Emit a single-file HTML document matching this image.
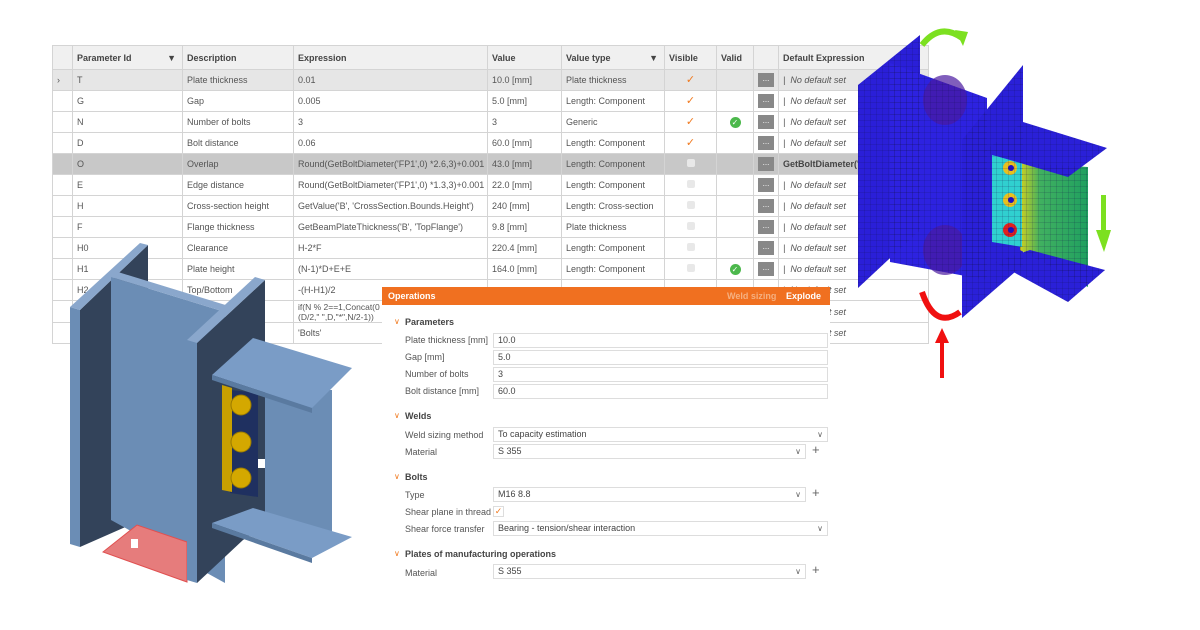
<!DOCTYPE html>
<html><head><meta charset="utf-8"><style>
body{margin:0;width:1200px;height:630px;background:#fff;position:relative;overflow:hidden;font-family:"Liberation Sans",sans-serif;font-size:9px;color:#555}
.a{position:absolute}
table{position:absolute;left:52px;top:45px;border-collapse:collapse;table-layout:fixed}
td{border:1px solid #d4d4d4;padding:0 0 0 4px;height:20px;white-space:nowrap;overflow:hidden;vertical-align:middle;line-height:10px}
tr.h td{background:#f0f0f0;font-weight:bold;color:#444;height:23px}
tr.s td{background:#e6e6e6}
tr.o td{background:#c8c8c8}
.ck{color:#f07a20;font-size:11px;text-align:center;padding:0}
.bx{display:inline-block;width:8px;height:8px;background:#e8e8e8;border-radius:2px}
.dots{display:inline-block;width:16px;height:14px;background:#888;color:#fff;text-align:center;line-height:12px;font-size:8px}
.nd{font-style:italic}
.ok{display:inline-block;width:11px;height:11px;border-radius:50%;background:#4cb84c;color:#fff;font-size:8px;line-height:11px;text-align:center}
#ops{position:absolute;left:382px;top:287px;width:448px;height:303px;background:#fff}
#ops .hd{height:18px;background:#f07020;color:#fff;font-weight:bold;line-height:18px;padding-left:6px}
.lb{position:absolute;left:23px}
.in{position:absolute;left:111px;width:329px;height:13px;border:1px solid #ddd;line-height:13px;padding-left:4px;color:#444}
.sec{position:absolute;left:23px;font-weight:bold;color:#444}
.chev{position:absolute;left:12px;color:#f07a20;font-size:8px}
.dd{position:absolute;right:4px;top:0;font-size:8px;color:#666}
.pl{position:absolute;left:430px;font-size:13px;color:#666}
</style></head><body>
<table>
<colgroup><col style="width:20px"><col style="width:110px"><col style="width:111px"><col style="width:194px"><col style="width:74px"><col style="width:103px"><col style="width:52px"><col style="width:37px"><col style="width:25px"><col style="width:150px"></colgroup>
<tr class="h"><td></td><td>Parameter Id <span style="float:right;margin-right:6px">▼</span></td><td>Description</td><td>Expression</td><td>Value</td><td>Value type <span style="float:right;margin-right:6px">▼</span></td><td>Visible</td><td>Valid</td><td></td><td>Default Expression</td></tr>
<tr class="s"><td>›</td><td>T</td><td>Plate thickness</td><td>0.01</td><td>10.0 [mm]</td><td>Plate thickness</td><td class="ck">✓</td><td></td><td><span class="dots">...</span></td><td class="nd">|&nbsp; No default set</td></tr>
<tr><td></td><td>G</td><td>Gap</td><td>0.005</td><td>5.0 [mm]</td><td>Length: Component</td><td class="ck">✓</td><td></td><td><span class="dots">...</span></td><td class="nd">|&nbsp; No default set</td></tr>
<tr><td></td><td>N</td><td>Number of bolts</td><td>3</td><td>3</td><td>Generic</td><td class="ck">✓</td><td style="text-align:center;padding:0"><span class="ok">✓</span></td><td><span class="dots">...</span></td><td class="nd">|&nbsp; No default set</td></tr>
<tr><td></td><td>D</td><td>Bolt distance</td><td>0.06</td><td>60.0 [mm]</td><td>Length: Component</td><td class="ck">✓</td><td></td><td><span class="dots">...</span></td><td class="nd">|&nbsp; No default set</td></tr>
<tr class="o"><td></td><td>O</td><td>Overlap</td><td>Round(GetBoltDiameter('FP1',0) *2.6,3)+0.001</td><td>43.0 [mm]</td><td>Length: Component</td><td style="text-align:center;padding:0"><span class="bx"></span></td><td></td><td><span class="dots">...</span></td><td style="font-weight:bold;color:#444">GetBoltDiameter('</td></tr>
<tr><td></td><td>E</td><td>Edge distance</td><td>Round(GetBoltDiameter('FP1',0) *1.3,3)+0.001</td><td>22.0 [mm]</td><td>Length: Component</td><td style="text-align:center;padding:0"><span class="bx"></span></td><td></td><td><span class="dots">...</span></td><td class="nd">|&nbsp; No default set</td></tr>
<tr><td></td><td>H</td><td>Cross-section height</td><td>GetValue('B', 'CrossSection.Bounds.Height')</td><td>240 [mm]</td><td>Length: Cross-section</td><td style="text-align:center;padding:0"><span class="bx"></span></td><td></td><td><span class="dots">...</span></td><td class="nd">|&nbsp; No default set</td></tr>
<tr><td></td><td>F</td><td>Flange thickness</td><td>GetBeamPlateThickness('B', 'TopFlange')</td><td>9.8 [mm]</td><td>Plate thickness</td><td style="text-align:center;padding:0"><span class="bx"></span></td><td></td><td><span class="dots">...</span></td><td class="nd">|&nbsp; No default set</td></tr>
<tr><td></td><td>H0</td><td>Clearance</td><td>H-2*F</td><td>220.4 [mm]</td><td>Length: Component</td><td style="text-align:center;padding:0"><span class="bx"></span></td><td></td><td><span class="dots">...</span></td><td class="nd">|&nbsp; No default set</td></tr>
<tr><td></td><td>H1</td><td>Plate height</td><td>(N-1)*D+E+E</td><td>164.0 [mm]</td><td>Length: Component</td><td style="text-align:center;padding:0"><span class="bx"></span></td><td style="text-align:center;padding:0"><span class="ok">✓</span></td><td><span class="dots">...</span></td><td class="nd">|&nbsp; No default set</td></tr>
<tr><td></td><td>H2</td><td>Top/Bottom</td><td>-(H-H1)/2</td><td></td><td></td><td></td><td></td><td></td><td class="nd">|&nbsp; No default set</td></tr>
<tr><td style="height:21px"></td><td></td><td></td><td style="font-size:8.5px">if(N % 2==1,Concat(0<br>(D/2," ",D,"*",N/2-1))</td><td></td><td></td><td></td><td></td><td></td><td class="nd">|&nbsp; No default set</td></tr>
<tr><td></td><td></td><td></td><td>'Bolts'</td><td></td><td></td><td></td><td></td><td></td><td class="nd">|&nbsp; No default set</td></tr>
</table>

<svg class="a" style="left:0;top:0" width="400" height="630" viewBox="0 0 400 630">
<polygon points="80,310 148,245 148,517 80,547" fill="#33435a"/>
<polygon points="70,307 80,310 80,547 70,544" fill="#6b8db5"/>
<polygon points="70,307 140,243 148,245 80,310" fill="#8aa7cc"/>
<polygon points="111,277 225,312 225,583 111,520" fill="#6b8db5"/>
<polygon points="111,277 118,272 232,307 225,312" fill="#8aa7cc"/>
<polygon points="103,552 137,525 187,542 187,582" fill="#e67c7c" stroke="#e05050" stroke-width="1"/>
<polygon points="232,387 332,390 332,533 232,510" fill="#6b8db5"/>
<polygon points="197,343 265,280 265,525 243,540 197,583" fill="#33435a"/>
<polygon points="187,340 197,343 197,583 187,580" fill="#6b8db5"/>
<polygon points="187,340 255,277 265,280 197,343" fill="#8aa7cc"/>
<polygon points="232,387 332,390 332,533 232,510" fill="#6b8db5" opacity="0"/>
<polygon points="230,390 258,393 258,497 230,493" fill="#1f3060"/>
<polygon points="222,385 232,388 232,492 222,490" fill="#c8a000"/>
<circle cx="241" cy="405" r="10" fill="#d4a800" stroke="#9a7a00"/>
<circle cx="241" cy="442" r="10" fill="#d4a800" stroke="#9a7a00"/>
<circle cx="241" cy="478" r="10" fill="#d4a800" stroke="#9a7a00"/>
<polygon points="212,375 253,338 352,368 312,408" fill="#7a9cc6"/>
<polygon points="212,375 312,408 312,413 212,380" fill="#5a7aa0"/>
<polygon points="212,523 253,508 352,537 312,558" fill="#7a9cc6"/>
<polygon points="212,523 312,558 312,563 212,528" fill="#5a7aa0"/>
<rect x="258" y="459" width="7" height="9" fill="#fff"/>
<rect x="131" y="539" width="7" height="9" fill="#fff"/>
</svg>

<div id="ops"><div class="hd">Operations<span style="position:absolute;left:345px;color:#f5b080">Weld sizing</span><span style="position:absolute;left:404px">Explode</span></div>
<span class="chev" style="top:30px">∨</span><span class="sec" style="top:30px">Parameters</span>
<span class="lb" style="top:48px">Plate thickness [mm]</span><div class="in" style="top:46px">10.0</div>
<span class="lb" style="top:65px">Gap [mm]</span><div class="in" style="top:63px">5.0</div>
<span class="lb" style="top:82px">Number of bolts</span><div class="in" style="top:80px">3</div>
<span class="lb" style="top:99px">Bolt distance [mm]</span><div class="in" style="top:97px">60.0</div>
<span class="chev" style="top:124px">∨</span><span class="sec" style="top:124px">Welds</span>
<span class="lb" style="top:143px">Weld sizing method</span><div class="in" style="top:140px">To capacity estimation<span class="dd">∨</span></div>
<span class="lb" style="top:160px">Material</span><div class="in" style="top:157px;width:307px">S 355<span class="dd">∨</span></div><span class="pl" style="top:155px">+</span>
<span class="chev" style="top:185px">∨</span><span class="sec" style="top:185px">Bolts</span>
<span class="lb" style="top:203px">Type</span><div class="in" style="top:200px;width:307px">M16 8.8<span class="dd">∨</span></div><span class="pl" style="top:198px">+</span>
<span class="lb" style="top:220px">Shear plane in thread</span><span class="a" style="left:111px;top:219px;width:9px;height:9px;border:1px solid #ddd;color:#f07a20;font-size:9px;line-height:9px;text-align:center">✓</span>
<span class="lb" style="top:237px">Shear force transfer</span><div class="in" style="top:234px">Bearing - tension/shear interaction<span class="dd">∨</span></div>
<span class="chev" style="top:262px">∨</span><span class="sec" style="top:262px">Plates of manufacturing operations</span>
<span class="lb" style="top:281px">Material</span><div class="in" style="top:277px;width:307px">S 355<span class="dd">∨</span></div><span class="pl" style="top:275px">+</span>
</div>

<svg class="a" style="left:840px;top:20px" width="300" height="370" viewBox="840 20 300 370">
<defs><pattern id="m" width="6" height="6" patternUnits="userSpaceOnUse"><path d="M0 0H6M0 0V6" stroke="#10104a" stroke-width="0.5" stroke-opacity="0.6" fill="none"/></pattern>
<linearGradient id="g" x1="0" x2="1"><stop offset="0" stop-color="#d0d020"/><stop offset="0.3" stop-color="#40b060"/><stop offset="1" stop-color="#20a060"/></linearGradient></defs>
<polygon points="858,85 920,35 920,230 858,288" fill="#2a1fd8"/>
<polygon points="890,63 987,98 987,280 890,262" fill="#2d22e0"/>
<ellipse cx="945" cy="100" rx="22" ry="25" fill="#4a1aa0" opacity="0.7"/>
<ellipse cx="945" cy="250" rx="22" ry="25" fill="#4a1aa0" opacity="0.7"/>
<polygon points="962,140 1023,65 1023,265 962,318" fill="#2a20d8"/>
<polygon points="1020,163 1088,167 1088,287 1020,250" fill="url(#g)"/>
<polygon points="992,155 1022,163 1022,247 992,242" fill="#30d0d0"/>
<circle cx="1010" cy="168" r="7" fill="#e8c020"/><circle cx="1010" cy="200" r="7" fill="#e8c020"/><circle cx="1010" cy="230" r="7" fill="#e02020"/>
<circle cx="1011" cy="168" r="3" fill="#2010c0"/><circle cx="1011" cy="200" r="3" fill="#2010c0"/><circle cx="1011" cy="230" r="3" fill="#2010c0"/>
<polygon points="983,152 1023,122 1107,148 1068,177" fill="#2a20d8"/>
<polygon points="995,262 1030,250 1105,270 1068,302" fill="#2a20d8"/>
<g fill="url(#m)"><polygon points="858,85 920,35 920,230 858,288"/><polygon points="890,63 987,98 987,280 890,262"/><polygon points="962,140 1023,65 1023,265 962,318"/><polygon points="1020,163 1088,167 1088,287 1020,250"/><polygon points="983,152 1023,122 1107,148 1068,177"/><polygon points="995,262 1030,250 1105,270 1068,302"/></g>
<path d="M922,45 Q940,22 962,38" stroke="#7ce020" stroke-width="6" fill="none"/><polygon points="955,30 968,32 963,46" fill="#7ce020"/>
<path d="M922,292 Q935,330 960,312" stroke="#f01010" stroke-width="6" fill="none"/>
<rect x="1101" y="195" width="5" height="38" fill="#7ce020"/><polygon points="1096,230 1111,230 1104,252" fill="#7ce020"/>
<rect x="940" y="340" width="4" height="38" fill="#f01010"/><polygon points="935,343 949,343 942,328" fill="#f01010"/>
</svg>
</body></html>
